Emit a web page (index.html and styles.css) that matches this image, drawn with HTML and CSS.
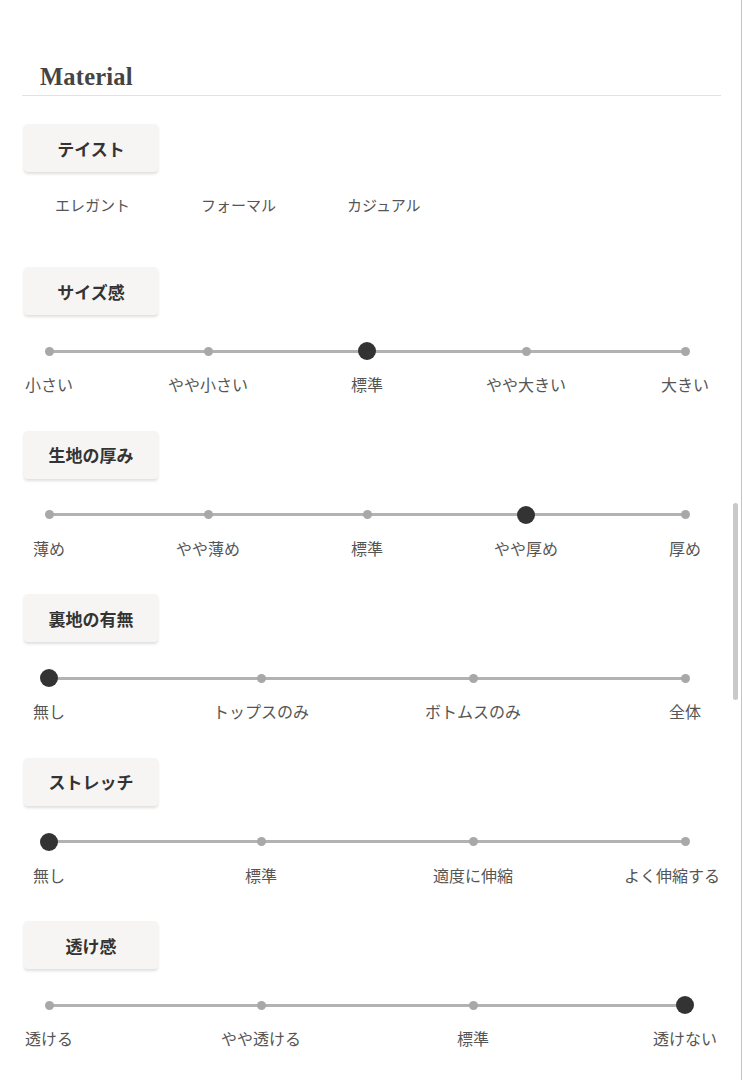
FILE: index.html
```html
<!DOCTYPE html>
<html lang="ja">
<head>
<meta charset="utf-8">
<title>Material</title>
<link rel="stylesheet" href="styles.css">
</head>
<body>
<div class="page">
  <div class="content">
    <header class="head"><h2 class="title">Material</h2></header>

    <section class="sec taste">
      <div class="tag">テイスト</div>
      <div class="taste-row">
        <span>エレガント</span>
        <span>フォーマル</span>
        <span>カジュアル</span>
      </div>
    </section>

    <section class="sec">
      <div class="tag">サイズ感</div>
      <div class="track">
        <span class="dot"></span><span class="dot"></span><span class="dot on"></span><span class="dot"></span><span class="dot"></span>
      </div>
      <div class="labels">
        <span class="lab"><span>小さい</span></span>
        <span class="lab"><span>やや小さい</span></span>
        <span class="lab"><span>標準</span></span>
        <span class="lab"><span>やや大きい</span></span>
        <span class="lab"><span>大きい</span></span>
      </div>
    </section>

    <section class="sec">
      <div class="tag">生地の厚み</div>
      <div class="track">
        <span class="dot"></span><span class="dot"></span><span class="dot"></span><span class="dot on"></span><span class="dot"></span>
      </div>
      <div class="labels">
        <span class="lab"><span>薄め</span></span>
        <span class="lab"><span>やや薄め</span></span>
        <span class="lab"><span>標準</span></span>
        <span class="lab"><span>やや厚め</span></span>
        <span class="lab"><span>厚め</span></span>
      </div>
    </section>

    <section class="sec">
      <div class="tag">裏地の有無</div>
      <div class="track">
        <span class="dot on"></span><span class="dot"></span><span class="dot"></span><span class="dot"></span>
      </div>
      <div class="labels">
        <span class="lab"><span>無し</span></span>
        <span class="lab"><span>トップスのみ</span></span>
        <span class="lab"><span>ボトムスのみ</span></span>
        <span class="lab"><span>全体</span></span>
      </div>
    </section>

    <section class="sec">
      <div class="tag">ストレッチ</div>
      <div class="track">
        <span class="dot on"></span><span class="dot"></span><span class="dot"></span><span class="dot"></span>
      </div>
      <div class="labels">
        <span class="lab"><span>無し</span></span>
        <span class="lab"><span>標準</span></span>
        <span class="lab"><span>適度に伸縮</span></span>
        <span class="lab lab-end"><span>よく伸縮する</span></span>
      </div>
    </section>

    <section class="sec">
      <div class="tag">透け感</div>
      <div class="track">
        <span class="dot"></span><span class="dot"></span><span class="dot"></span><span class="dot on"></span>
      </div>
      <div class="labels">
        <span class="lab"><span>透ける</span></span>
        <span class="lab"><span>やや透ける</span></span>
        <span class="lab"><span>標準</span></span>
        <span class="lab"><span>透けない</span></span>
      </div>
    </section>
  </div>
  <div class="scrollbar"><div class="thumb"></div></div>
</div>
</body>
</html>
```
FILE: styles.css
```css
* { box-sizing: border-box; }
html, body { margin: 0; padding: 0; background: #fff; }
body {
  font-family: "Noto Sans CJK JP", "Noto Sans", sans-serif;
  color: #555;
  overflow: hidden;
}
.page {
  position: relative;
  width: 743px;
  height: 1080px;
  overflow: hidden;
}
.content {
  width: 742px;
  height: 1080px;
  border-right: 1px solid #c4c4c4;
}
.head {
  margin: 0 20px 0 22px;
  padding: 62px 0 3px 18px;
  border-bottom: 1px solid #e2e2e2;
}
.title {
  margin: 0;
  font-family: "Liberation Serif", "DejaVu Serif", serif;
  font-weight: 700;
  font-size: 24.5px;
  line-height: 30px;
  color: #444;
  letter-spacing: 0.2px;
}
.sec { padding-left: 24px; }
.taste { padding-top: 28px; }
.tag {
  width: 134px;
  height: 48px;
  display: flex;
  align-items: center;
  justify-content: center;
  background: #f7f5f3;
  border-radius: 4px;
  box-shadow: 0 2px 3px rgba(0, 0, 0, 0.13);
  font-size: 17px;
  font-weight: 700;
  color: #333;
}
.taste-row {
  display: flex;
  gap: 71px;
  padding-left: 31px;
  margin-top: 23px;
  margin-bottom: 52px;
  font-size: 15px;
  line-height: 20px;
  color: #555;
}
.track {
  margin: 27px 0 0 25px;
  width: 636px;
  height: 18px;
  display: flex;
  justify-content: space-between;
  align-items: center;
  background: linear-gradient(#b2b2b2, #b2b2b2) center / 100% 3px no-repeat;
}
.dot {
  width: 0;
  height: 18px;
  display: flex;
  align-items: center;
  justify-content: center;
}
.dot::before {
  content: "";
  flex: none;
  width: 9px;
  height: 9px;
  border-radius: 50%;
  background: #a8a8a8;
}
.dot.on::before {
  width: 18px;
  height: 18px;
  background: #333;
}
.labels {
  margin: 13px 0 35.5px 25px;
  width: 636px;
  height: 22px;
  display: flex;
  justify-content: space-between;
  font-size: 16px;
  line-height: 22px;
  color: #555;
}
.lab {
  width: 0;
  display: flex;
  justify-content: center;
  white-space: nowrap;
}
.lab-end {
  justify-content: flex-end;
}
.lab-end > span {
  margin-right: -35px;
}
.scrollbar {
  position: absolute;
  top: 0;
  right: 5px;
  width: 5px;
  height: 1080px;
}
.thumb {
  margin-top: 503px;
  width: 5px;
  height: 197px;
  border-radius: 3px;
  background: #c9c9c9;
}
```
